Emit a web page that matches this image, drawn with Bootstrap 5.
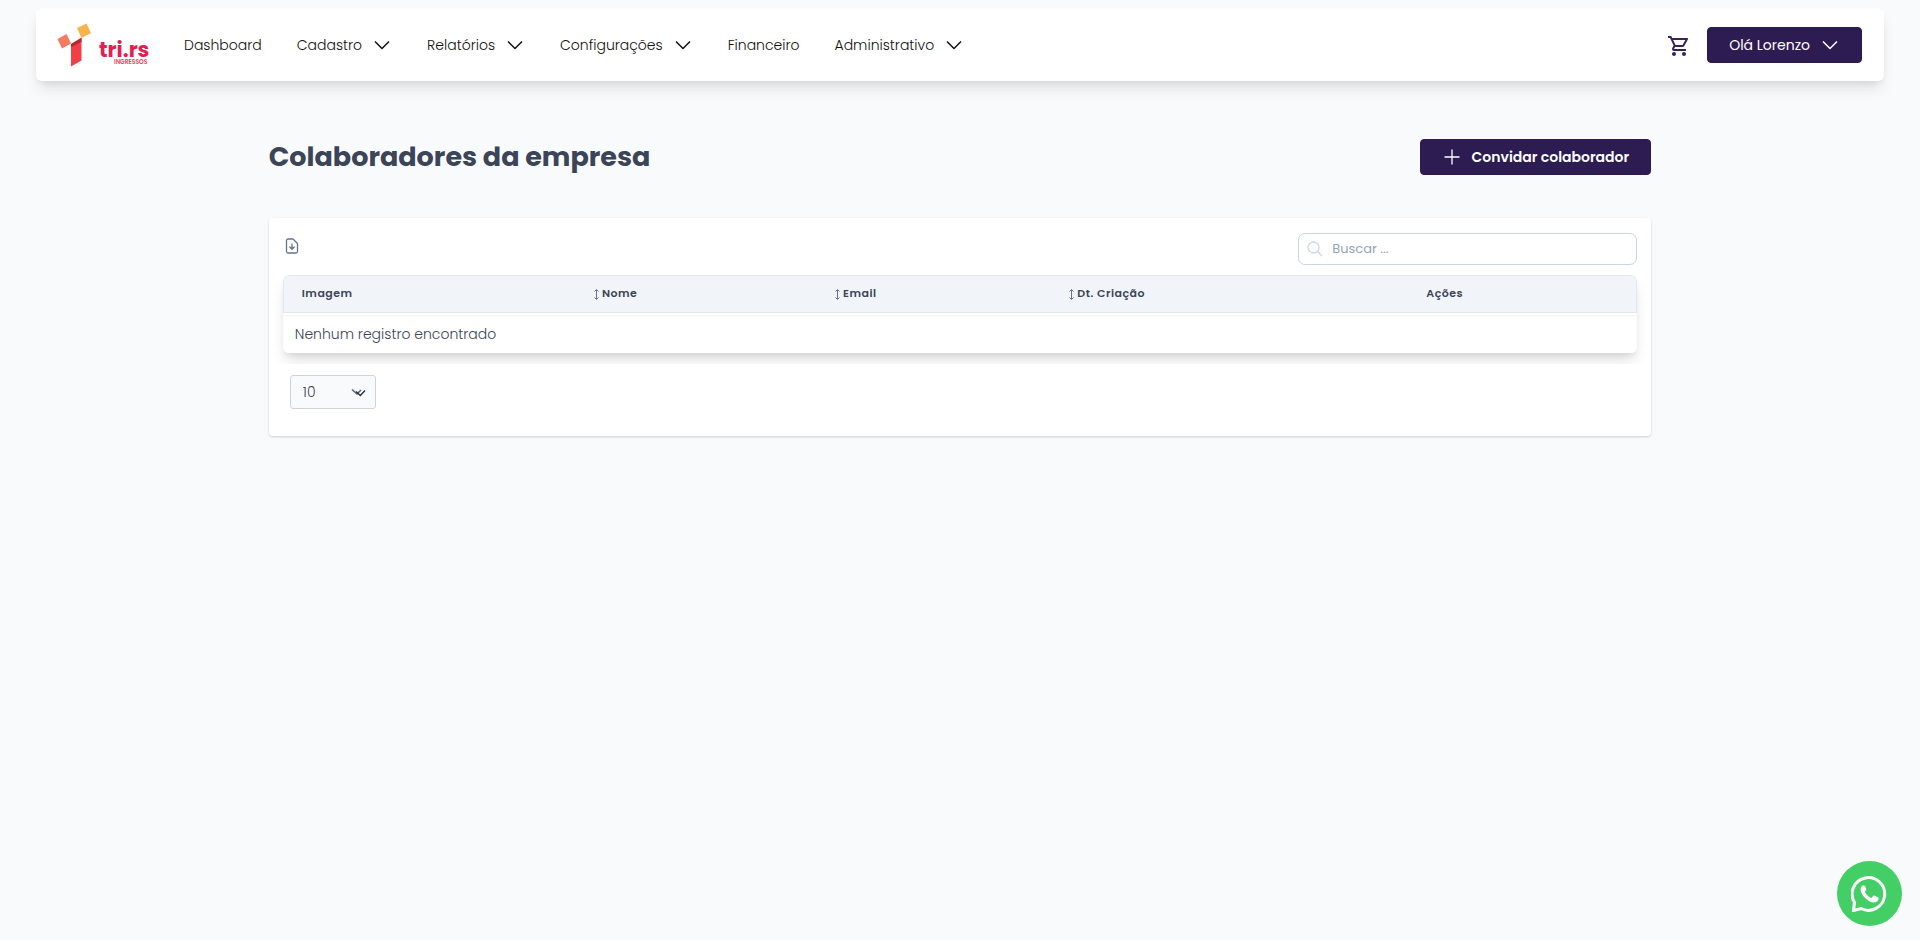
<!DOCTYPE html>
<html lang="pt-BR">
<head>
<meta charset="utf-8">
<meta name="viewport" content="width=device-width, initial-scale=1">
<title>Colaboradores da empresa</title>
<link href="https://cdn.jsdelivr.net/npm/bootstrap@5.3.0/dist/css/bootstrap.min.css" rel="stylesheet">
<style>
  body { font-family: Poppins, Inter, "Liberation Sans", sans-serif; background: #f9fafc; color: #3b4557; min-height: 100vh; }
  .top-wrap { padding: 9px 36px 0; }
  .top-bar { min-height: 72px; padding: 0 22px 0 21px; border-radius: 6px; background: #fff; box-shadow: 0 10px 15px -3px rgba(0,0,0,.11), 0 4px 6px -2px rgba(0,0,0,.06); }
  .top-bar .navbar-nav { gap: 35px; }
  .top-bar .navbar-nav .nav-link { gap: 10px; padding: 0; font-size: 14px; font-weight: 300; line-height: 24px; color: #111; white-space: nowrap; }
  .brand-link { margin-right: 33px; }
  .btn-brand { --bs-btn-color: #fff; --bs-btn-bg: #2d1c52; --bs-btn-border-color: #2d1c52; --bs-btn-hover-color: #fff; --bs-btn-hover-bg: #3d2a68; --bs-btn-hover-border-color: #3d2a68; gap: 10px; height: 36px; padding: 0 21px; border-radius: 4px; font-size: 14px; white-space: nowrap; }
  .page-wrap { width: 72%; margin: 0 auto; padding-top: 58px; }
  .page-title { font-size: 27px; font-weight: 700; line-height: 36px; color: #3b4557; }
  .panel { margin-top: 43px; padding: 15px 14px 27px; border-radius: 4px; background: #fff; box-shadow: 0 1px 3px rgba(0,0,0,.12), 0 1px 2px rgba(0,0,0,.06); }
  .search-box { width: 339px; }
  .search-box svg { position: absolute; left: 9px; top: 8px; }
  .search-box .form-control { height: 32px; padding: 0 12px 0 33px; font-size: 13px; border: 1px solid #cbd5e1; border-radius: 7px; }
  .search-box .form-control::placeholder { color: #94a3b8; opacity: 1; }
  .table-clip { overflow: hidden; margin: 0 -14px; padding: 10px 14px 11px; }
  .table-frame { border-radius: 6px; overflow: hidden; }
  .table-shade { border-radius: 6px; box-shadow: 0 10px 15px -3px rgba(0,0,0,.13), 0 4px 6px -2px rgba(0,0,0,.08); }
  .grid-table { width: 100%; border-collapse: separate; border-spacing: 0; background: #fff; }
  .grid-table th { height: 38px; padding: 0 18px 2px; font-size: 11px; font-weight: 600; letter-spacing: .5px; line-height: 16px; background: #f1f4f9; border-top: 1px solid #e2e8f0; border-bottom: 1px solid #e2e8f0; }
  .grid-table th:first-child { border-left: 1px solid #e2e8f0; border-top-left-radius: 6px; }
  .grid-table th:last-child { border-right: 1px solid #e2e8f0; border-top-right-radius: 6px; }
  .grid-table .gap-row td { height: 3px; padding: 0; border-bottom: 1px solid #f1f4f9; }
  .grid-table .info-row td { height: 37px; padding: 0 12px; font-size: 14px; font-weight: 300; }
  .c-img { width: 21.5%; } .c-name { width: 17.8%; } .c-mail { width: 17.3%; } .c-date { width: 26.5%; } .c-act { width: 16.9%; }
  .page-size { width: 86px; height: 34px; margin: 11px 0 0 7px; padding: 0 12px; font-size: 14px; font-weight: 300; color: #3b4557; border: 1px solid #cdd2dc; border-radius: 3px; background-color: #f9fafc; background-position: right 9px center; background-size: 15px 9px;
    background-image: url("data:image/svg+xml,%3Csvg xmlns='http://www.w3.org/2000/svg' width='15' height='9' viewBox='0 0 15 9'%3E%3Cpath d='M1 1.5l5 4.5 4-4' fill='none' stroke='%23596579' stroke-width='1.6'/%3E%3Cpath d='M5 3.5l4.300 4L14 2.500' fill='none' stroke='%232b2e45' stroke-width='1.400'/%3E%3C/svg%3E"); }
  .chat-fab { position: fixed; right: 18px; bottom: 14px; width: 65px; height: 65px; background: #43cf66; }
</style>
</head>
<body>
<header class="top-wrap">
  <nav class="navbar navbar-expand top-bar">
    <a class="navbar-brand brand-link p-0" href="#" aria-label="tri.rs ingressos">
      <svg class="d-block" width="94" height="46" viewBox="0 -1 94 46">
        <path d="M14 21.500 24.500 15.500V37.500L14 43.500Z" fill="#ee4046"/>
        <path d="M14 21 24.500 14.500V19L14 24Z" fill="#b9262d"/>
        <path d="M0.500 16 9.500 11 14 20.500 5 25.500Z" fill="#f47a62"/>
        <path d="M20 5 29.500 0.500 34 10 24.500 15Z" fill="#fab34c"/>
        <text x="42" y="34" font-size="21" font-weight="700" fill="#e51e50">tri.rs</text>
        <text x="57" y="41" font-size="6" font-weight="600" fill="#e8425b">INGRESSOS</text>
      </svg>
    </a>
    <ul class="navbar-nav align-items-center">
      <li class="nav-item"><a class="nav-link" href="#">Dashboard</a></li>
      <li class="nav-item"><a class="nav-link d-flex align-items-center" href="#">Cadastro <svg width="20" height="20"><use href="#chev"/></svg></a></li>
      <li class="nav-item"><a class="nav-link d-flex align-items-center" href="#">Relatórios <svg width="20" height="20"><use href="#chev"/></svg></a></li>
      <li class="nav-item"><a class="nav-link d-flex align-items-center" href="#">Configurações <svg width="20" height="20"><use href="#chev"/></svg></a></li>
      <li class="nav-item"><a class="nav-link" href="#">Financeiro</a></li>
      <li class="nav-item"><a class="nav-link d-flex align-items-center" href="#">Administrativo <svg width="20" height="20"><use href="#chev"/></svg></a></li>
    </ul>
    <div class="d-flex align-items-center ms-auto">
      <a class="d-block me-3" href="#" aria-label="Carrinho">
        <svg class="d-block" width="24" height="24" viewBox="0 -1 24 24" fill="#36235f"><path d="M15.550 13c.75 0 1.410-.41 1.750-1.030l3.580-6.490A.996.996 0 0 0 20.010 4H5.210l-.94-2H1v2h2l3.600 7.590-1.350 2.440C4.520 15.370 5.480 17 7 17h12v-2H7l1.100-2h7.450zM6.160 6h12.150l-2.760 5H8.530L6.160 6zM7 18c-1.100 0-1.990.9-1.990 2S5.900 22 7 22s2-.9 2-2-.9-2-2-2zm10 0c-1.100 0-1.990.9-1.990 2s.89 2 1.990 2 2-.9 2-2-.9-2-2-2z"/></svg>
      </a>
      <button class="btn btn-brand d-flex align-items-center" type="button">Olá Lorenzo <svg width="20" height="20"><use href="#chev"/></svg></button>
    </div>
  </nav>
</header>

<main class="page-wrap">
  <div class="d-flex justify-content-between align-items-center">
    <h1 class="page-title m-0">Colaboradores da empresa</h1>
    <button class="btn btn-brand fw-semibold d-flex align-items-center" type="button">
      <svg width="20" height="20" viewBox="0 0 20 20"><path d="M10 2.500v15M2.500 10h15" stroke="#fff" stroke-width="1.300"/></svg>Convidar colaborador</button>
  </div>

  <section class="panel">
    <div class="d-flex justify-content-between align-items-start">
      <button class="btn p-0 border-0" type="button" aria-label="Exportar">
        <svg class="d-block" width="18" height="26" viewBox="0 0 18 26" fill="none" stroke="#64748b" stroke-width="1.300" stroke-linejoin="round" stroke-linecap="round"><path d="M5 6h5l4.500 4.500V18.500a1.500 1.500 0 0 1-1.500 1.500H5a1.500 1.500 0 0 1-1.500-1.500v-11A1.500 1.500 0 0 1 5 6ZM9 11v5M6.800 14 9 16.200 11.200 14"/></svg>
      </button>
      <div class="search-box position-relative">
        <svg width="16" height="16" viewBox="0 0 16 16" fill="none" stroke="#cbd5e1" stroke-width="1.300"><circle cx="6.500" cy="6.500" r="5.500"/><path d="M10.500 10.500 15 15"/></svg>
        <input class="form-control" type="search" placeholder="Buscar ..." aria-label="Buscar">
      </div>
    </div>
    <div class="table-clip">
      <div class="table-shade">
        <div class="table-frame">
          <table class="grid-table">
            <thead>
              <tr>
                <th class="c-img" scope="col">Imagem</th>
                <th class="c-name" scope="col"><svg width="10" height="12"><use href="#sort"/></svg>Nome</th>
                <th class="c-mail" scope="col"><svg width="10" height="12"><use href="#sort"/></svg>Email</th>
                <th class="c-date" scope="col"><svg width="10" height="12"><use href="#sort"/></svg>Dt. Criação</th>
                <th class="c-act" scope="col">Ações</th>
              </tr>
            </thead>
            <tbody>
              <tr class="gap-row"><td colspan="5"></td></tr>
              <tr class="info-row"><td colspan="5">Nenhum registro encontrado</td></tr>
            </tbody>
          </table>
        </div>
      </div>
    </div>
    <select class="form-select page-size" aria-label="Registros por página"><option>10</option><option>25</option><option>50</option></select>
  </section>
</main>

<a class="chat-fab rounded-circle d-flex align-items-center justify-content-center" href="#" aria-label="WhatsApp">
  <svg width="37" height="37" viewBox="0 0 37 37"><path d="M3.500 27.500A16.300 16.300 0 1 1 10 33.500L2.500 35.500Z" fill="none" stroke="#fff" stroke-width="3"/><path d="M12.500 10.200c-1.500.2-2.900 1.700-2.900 4 0 5.700 7.600 13.300 13.300 13.300 2.600 0 4.800-1.800 4.800-4.200 0-.9-4.400-2.900-5-2.700-.8.3-1.600 2.400-2.300 2.400-1.600 0-6.400-4.600-6.400-6.200 0-.7 1.400-1.600 1.400-2.500 0-.7-1.400-4.200-2.900-4.100Z" fill="#fff"/></svg>
</a>

<svg class="d-none">
  <symbol id="chev" viewBox="0 0 20 20"><path d="M3 6.500 10 13.500 17 6.500" fill="none" stroke="currentColor" stroke-width="1.500" stroke-linejoin="round"/></symbol>
  <symbol id="sort" viewBox="0 0 10 12"><path d="M4.500 2v9M2.500 3.500l2-2 2 2M2.500 9.500l2 2 2-2" fill="none" stroke="#64748b" stroke-width="1"/></symbol>
</svg>
<script src="https://cdn.jsdelivr.net/npm/bootstrap@5.3.0/dist/js/bootstrap.bundle.min.js"></script>
</body>
</html>
